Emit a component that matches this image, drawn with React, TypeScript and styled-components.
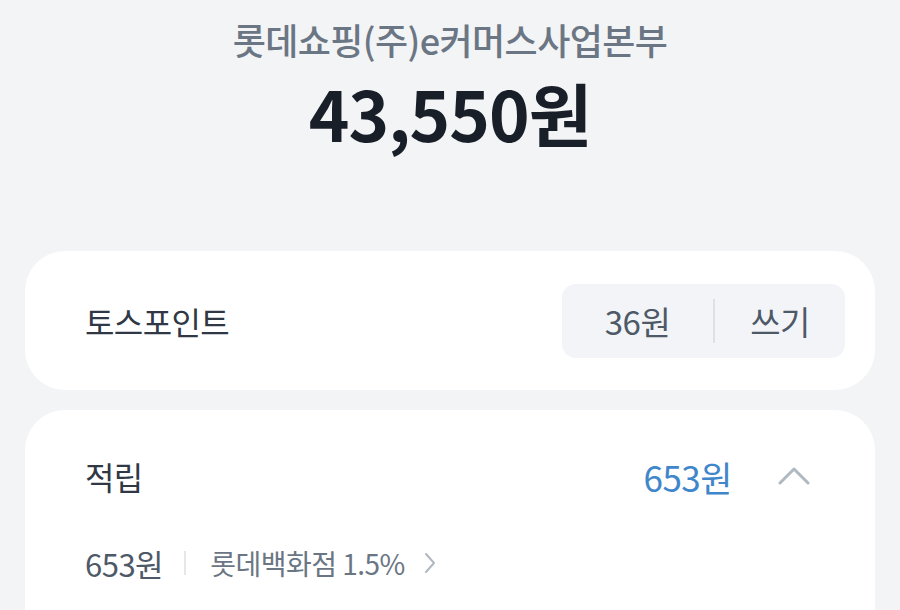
import React, { ReactElement } from "react"
import styled, { createGlobalStyle } from "styled-components"

const GlobalStyle = createGlobalStyle`
	html, body {
		margin: 0;
		padding: 0;
		background: #f3f4f6;
		font-family: "Noto Sans CJK KR", "Noto Sans", sans-serif;
		-webkit-font-smoothing: antialiased;
	}
`

const Page = styled.div`
	box-sizing: border-box;
	width: 900px;
	height: 610px;
	overflow: hidden;
	padding: 0 25px;
`

const Header = styled.div`
	display: flex;
	flex-direction: column;
	align-items: center;
	padding-top: 15px;
	height: 251px;
	box-sizing: border-box;
`

const Merchant = styled.div`
	font-size: 36px;
	font-weight: 500;
	line-height: 48px;
	color: #6b7684;
	letter-spacing: -0.6px;
`

const Amount = styled.div`
	margin-top: 9px;
	font-size: 69px;
	font-weight: 700;
	line-height: 80px;
	color: #191f28;
	letter-spacing: -1px;
`

const Card = styled.section<{ $open?: boolean }>`
	background: #ffffff;
	border-radius: 40px;
	margin-bottom: 20px;
	${(p) => (p.$open ? "border-bottom-left-radius: 0; border-bottom-right-radius: 0;" : "")}
`

const PointRow = styled.div`
	display: flex;
	align-items: center;
	justify-content: space-between;
	height: 139px;
	padding: 0 30px 0 60px;
`

const Label = styled.div`
	font-size: 32px;
	font-weight: 400;
	color: #2f3844;
	letter-spacing: -0.6px;
`

const Pill = styled.div`
	display: flex;
	align-items: center;
	height: 74px;
	background: #f2f4f7;
	border-radius: 14px;
`

const PillPart = styled.div<{ $w: number }>`
	width: ${(p) => p.$w}px;
	text-align: center;
	font-size: 33px;
	font-weight: 400;
	color: #4e5968;
	letter-spacing: -0.5px;
`

const PillDivider = styled.div`
	width: 2px;
	height: 44px;
	background: #dde1e6;
`

const EarnHeader = styled.div`
	display: flex;
	align-items: center;
	padding: 40px 65px 0 60px;
	height: 52px;
`

const Spacer = styled.div`
	flex: 1;
`

const EarnTotal = styled.div`
	font-size: 35px;
	font-weight: 400;
	color: #3f86cb;
	letter-spacing: -0.5px;
	margin-right: 46px;
`

const DetailRow = styled.div`
	display: flex;
	align-items: center;
	padding: 41px 60px 60px;
	height: 40px;
`

const DetailAmount = styled.div`
	font-size: 31px;
	font-weight: 400;
	color: #4e5968;
	letter-spacing: -0.5px;
`

const DetailDivider = styled.div`
	width: 2px;
	height: 24px;
	background: #e5e8eb;
	margin: 0 24px 0 21px;
`

const DetailText = styled.div`
	font-size: 28px;
	font-weight: 400;
	color: #6b7684;
	letter-spacing: -0.5px;
`

const Chevron = styled.svg`
	display: block;
	flex: none;
`

export default function App(): ReactElement {
	return (
		<Page>
			<GlobalStyle />
			<Header>
				<Merchant>롯데쇼핑(주)e커머스사업본부</Merchant>
				<Amount>43,550원</Amount>
			</Header>

			<Card>
				<PointRow>
					<Label>토스포인트</Label>
					<Pill>
						<PillPart $w={151}>36원</PillPart>
						<PillDivider />
						<PillPart $w={130}>쓰기</PillPart>
					</Pill>
				</PointRow>
			</Card>

			<Card $open>
				<EarnHeader>
					<Label>적립</Label>
					<Spacer />
					<EarnTotal>653원</EarnTotal>
					<Chevron width="32" height="20" viewBox="0 0 32 20">
						<path d="M2 17 L16 3 L30 17" fill="none" stroke="#b0b8c1" strokeWidth="3" strokeLinecap="round" strokeLinejoin="round" />
					</Chevron>
				</EarnHeader>
				<DetailRow>
					<DetailAmount>653원</DetailAmount>
					<DetailDivider />
					<DetailText>롯데백화점 1.5%</DetailText>
					<Chevron width="14" height="24" viewBox="0 0 14 24" style={{ marginLeft: 18 }}>
						<path d="M3 3 L11 12 L3 21" fill="none" stroke="#b0b8c1" strokeWidth="2" strokeLinecap="round" strokeLinejoin="round" />
					</Chevron>
				</DetailRow>
			</Card>
		</Page>
	)
}
